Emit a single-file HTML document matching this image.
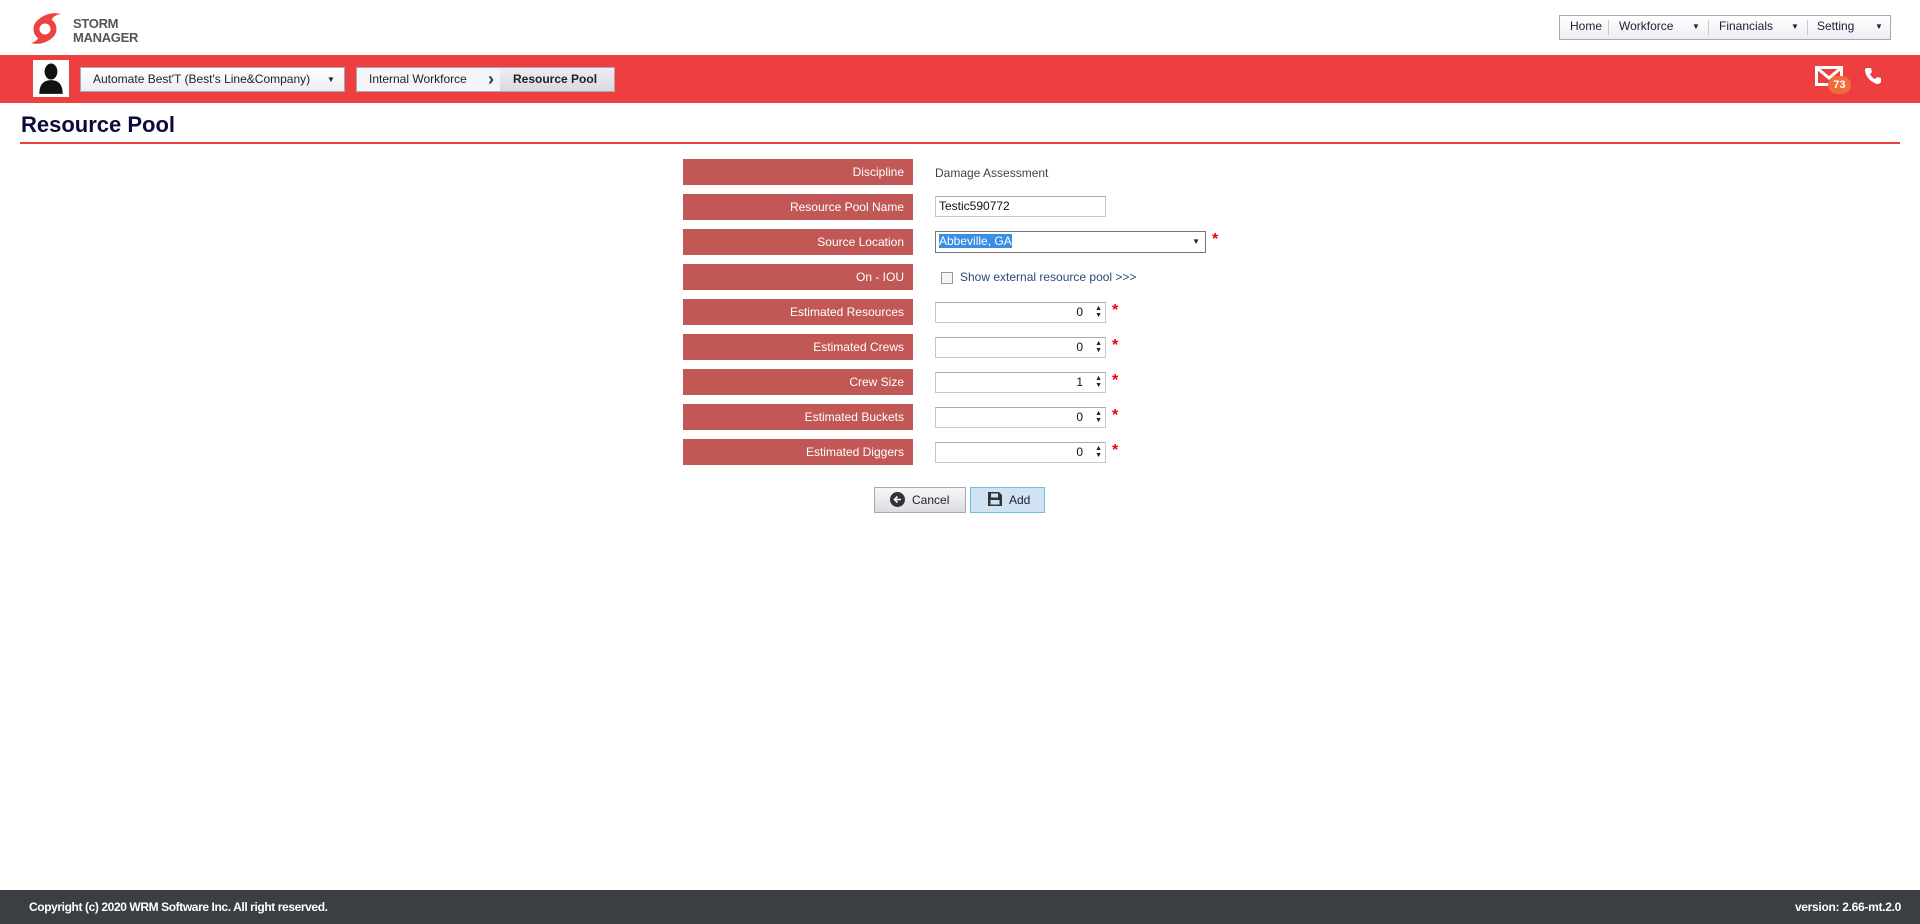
<!DOCTYPE html>
<html><head><meta charset="utf-8"><style>
*{margin:0;padding:0;box-sizing:border-box}
body{width:1920px;height:924px;position:relative;background:#fff;font-family:"Liberation Sans",sans-serif;font-size:12px;overflow:hidden}
.a{position:absolute;white-space:nowrap}
.lbl{position:absolute;left:683px;width:230px;height:26px;background:#c15856;color:#fff;text-align:right;padding-right:9px;line-height:26px;font-size:12px;white-space:nowrap}
.inp{position:absolute;left:935px;width:171px;height:21px;border:1px solid #c8c8cc;border-top-color:#a8a8b0;background:#fff;line-height:19px;font-size:12px;text-align:right;padding-right:22px;color:#111;white-space:nowrap}
.sp{position:absolute;right:3px;top:2px;font-size:7px;line-height:7px;color:#222}
.ast{position:absolute;left:1112px;color:#e00;font-size:16px;font-weight:bold}
.navt{position:absolute;top:15px;height:25px;line-height:23px;font-size:12px;color:#223;white-space:nowrap}
</style></head><body>
<svg class="a" style="left:28px;top:10px" width="36" height="36" viewBox="0 0 34 36">
<circle cx="16" cy="19" r="8.5" fill="none" stroke="#ee4242" stroke-width="6"/>
<path d="M10 9 Q20 1 32 4 Q24 5 22 11 Z" fill="#ee4242"/>
<path d="M22 29 Q12 36 2 33 Q9 31 10 26 Z" fill="#ee4242"/>
</svg>
<div class="a" style="left:73px;top:17px;font-size:13px;line-height:14px;color:#555;font-weight:bold;letter-spacing:-0.3px">STORM<br>MANAGER</div>
<div class="a" style="left:1559px;top:15px;width:332px;height:25px;border:1px solid #a7a7b3;background:linear-gradient(#fff,#eceef4)"></div>
<div class="navt" style="left:1570px">Home</div>
<div class="a" style="left:1608px;top:20px;width:1px;height:15px;background:#ccc"></div>
<div class="navt" style="left:1619px">Workforce</div><div class="navt" style="left:1692px;font-size:8px">▼</div>
<div class="a" style="left:1708px;top:20px;width:1px;height:15px;background:#ccc"></div>
<div class="navt" style="left:1719px">Financials</div><div class="navt" style="left:1791px;font-size:8px">▼</div>
<div class="a" style="left:1807px;top:20px;width:1px;height:15px;background:#ccc"></div>
<div class="navt" style="left:1817px">Setting</div><div class="navt" style="left:1875px;font-size:8px">▼</div>

<div class="a" style="left:0;top:55px;width:1920px;height:48px;background:#ee3f40"></div>
<div class="a" style="left:33px;top:60px;width:36px;height:37px;background:#fff"></div>
<svg class="a" style="left:37px;top:63px" width="28" height="32" viewBox="0 0 24 30"><ellipse cx="12" cy="8" rx="6" ry="7.5" fill="#111"/><path d="M1 29 Q1 16 12 16 Q23 16 23 29 Z" fill="#111"/></svg>
<div class="a" style="left:80px;top:67px;width:265px;height:25px;border:1px solid #a7a7b3;background:linear-gradient(#fff,#eceef4);line-height:23px;padding-left:12px;color:#222">Automate Best'T (Best's Line&amp;Company)<span style="position:absolute;left:246px;font-size:8px">▼</span></div>
<div class="a" style="left:356px;top:67px;width:259px;height:25px;border:1px solid #a7a7b3;background:#f4f5f8;line-height:23px;padding-left:12px;color:#222">Internal Workforce</div>
<div class="a" style="left:500px;top:68px;width:114px;height:23px;background:linear-gradient(#eceef2,#d8dae0);line-height:23px;padding-left:13px;font-weight:bold;color:#222">Resource Pool</div>
<div class="a" style="left:488px;top:67px;color:#1b3a5c;font-size:18px;font-weight:bold;line-height:25px">›</div>
<svg class="a" style="left:1815px;top:66px" width="30" height="22" viewBox="0 0 30 22"><rect x="1.5" y="1.5" width="25" height="17" fill="none" stroke="#fff" stroke-width="3"/><path d="M2 2 L14 12 L26 2" fill="none" stroke="#fff" stroke-width="3"/></svg>
<div class="a" style="left:1828px;top:76px;width:23px;height:18px;border-radius:9px;background:#f06a3c;color:#fff;font-weight:bold;font-size:11px;text-align:center;line-height:18px">73</div>
<svg class="a" style="left:1864px;top:67px" width="18" height="18" viewBox="0 0 18 18"><path d="M3 1 L7 1 L8 5 L6 7 Q8 11 11 12 L13 10 L17 11 L17 15 Q16 17 13 17 Q2 13 1 3 Q1 1 3 1 Z" fill="#fff"/></svg>

<div class="a" style="left:21px;top:112px;font-size:22px;font-weight:bold;color:#0b0b3b">Resource Pool</div>
<div class="a" style="left:20px;top:142px;width:1880px;height:2px;background:#ee3f40"></div>

<div class="lbl" style="top:159px">Discipline</div>
<div class="a" style="left:935px;top:166px;color:#444">Damage Assessment</div>
<div class="lbl" style="top:194px">Resource Pool Name</div>
<div class="inp" style="top:196px;text-align:left;padding-left:3px">Testic590772</div>
<div class="lbl" style="top:229px">Source Location</div>
<div class="inp" style="top:231px;width:271px;height:22px;border-color:#777;text-align:left;padding-left:3px"><span style="background:#3a8ee6;color:#fff">Abbeville, GA</span><span class="a" style="right:5px;top:0;font-size:8px;color:#222">▼</span></div>
<div class="ast" style="top:231px;left:1212px">*</div>
<div class="lbl" style="top:264px">On - IOU</div>
<div class="a" style="left:941px;top:272px;width:12px;height:12px;border:1px solid #999;background:#f4f4f4"></div>
<div class="a" style="left:960px;top:270px;color:#2b4a7a">Show external resource pool &gt;&gt;&gt;</div>

<div class="lbl" style="top:299px">Estimated Resources</div>
<div class="inp" style="top:302px">0<span class="sp">▲<br>▼</span></div><div class="ast" style="top:302px">*</div>
<div class="lbl" style="top:334px">Estimated Crews</div>
<div class="inp" style="top:337px">0<span class="sp">▲<br>▼</span></div><div class="ast" style="top:337px">*</div>
<div class="lbl" style="top:369px">Crew Size</div>
<div class="inp" style="top:372px">1<span class="sp">▲<br>▼</span></div><div class="ast" style="top:372px">*</div>
<div class="lbl" style="top:404px">Estimated Buckets</div>
<div class="inp" style="top:407px">0<span class="sp">▲<br>▼</span></div><div class="ast" style="top:407px">*</div>
<div class="lbl" style="top:439px">Estimated Diggers</div>
<div class="inp" style="top:442px">0<span class="sp">▲<br>▼</span></div><div class="ast" style="top:442px">*</div>

<div class="a" style="left:874px;top:487px;width:92px;height:26px;border:1px solid #a7a7b3;background:linear-gradient(#f7f7f9,#dcdde2);line-height:24px;padding-left:37px;color:#223">Cancel</div>
<svg class="a" style="left:890px;top:492px" width="15" height="15" viewBox="0 0 15 15"><circle cx="7.5" cy="7.5" r="7.5" fill="#333"/><path d="M11 7.5 H4.5 M7.5 4.5 L4.5 7.5 L7.5 10.5" stroke="#fff" stroke-width="1.6" fill="none"/></svg>
<div class="a" style="left:970px;top:487px;width:75px;height:26px;border:1px solid #6fc2de;background:#cfe3f4;line-height:24px;padding-left:38px;color:#223">Add</div>
<svg class="a" style="left:988px;top:492px" width="14" height="14" viewBox="0 0 14 14"><path d="M0 0 H11 L14 3 V14 H0 Z" fill="#333"/><rect x="3" y="1.5" width="7" height="4" fill="#cfe3f4"/><rect x="2.5" y="8" width="9" height="4.5" fill="#cfe3f4"/></svg>

<div class="a" style="left:0;top:890px;width:1920px;height:34px;background:#3b3e43"></div>
<div class="a" style="left:29px;top:900px;color:#fff;font-weight:bold;font-size:12px;letter-spacing:-0.4px">Copyright (c) 2020 WRM Software Inc. All right reserved.</div>
<div class="a" style="right:19px;top:900px;color:#fff;font-weight:bold;font-size:12px;letter-spacing:-0.3px">version: 2.66-mt.2.0</div>
</body></html>
